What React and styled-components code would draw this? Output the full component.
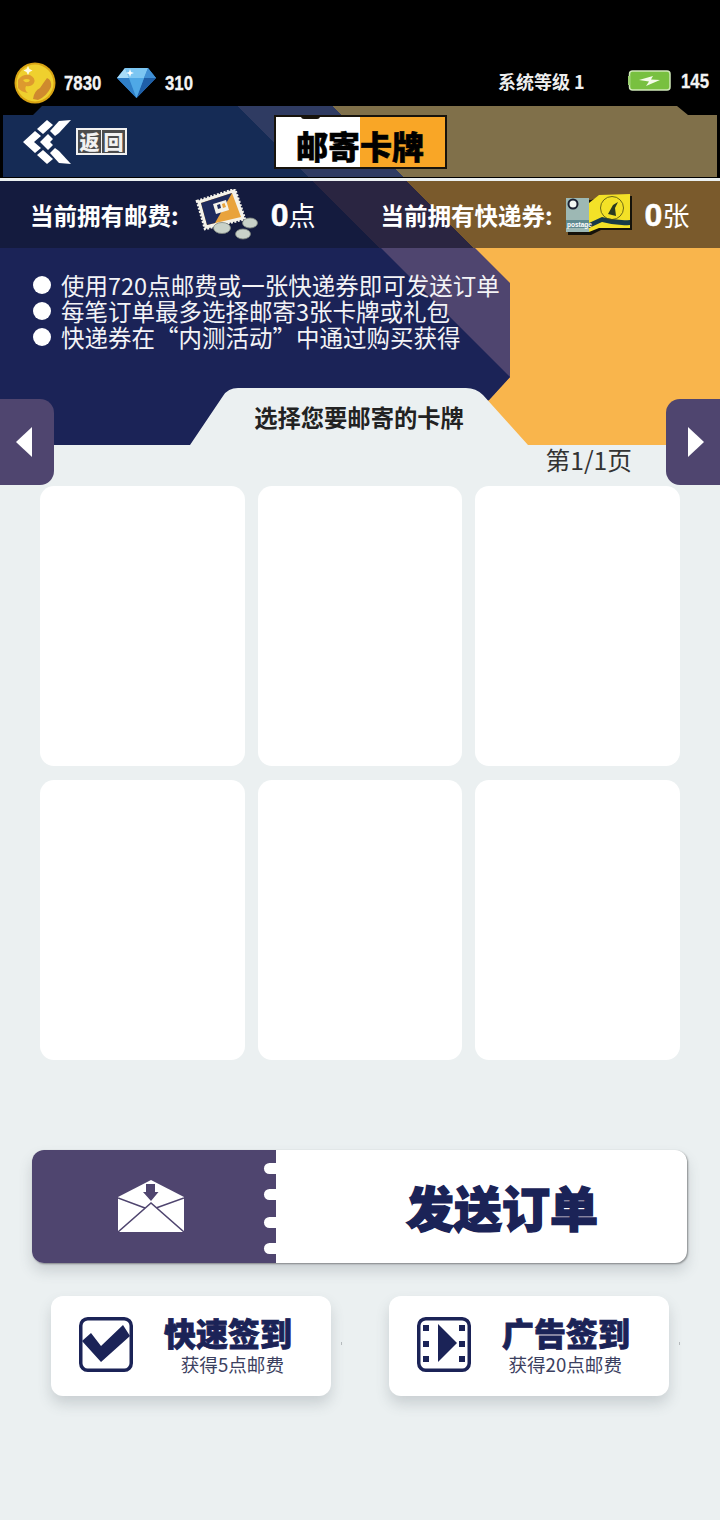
import React from "react";
import styled, { createGlobalStyle } from "styled-components";

const CJK = `"Noto Sans CJK SC", "Noto Sans", sans-serif`;
const NAVY = "#1b2357";
const PURPLE = "#4f456f";

const Global = createGlobalStyle`
  html, body { margin: 0; padding: 0; background: #ebf0f1; }
  * { box-sizing: border-box; }
`;

const Page = styled.div`
  position: relative;
  width: 720px;
  height: 1520px;
  overflow: hidden;
  background: #ebf0f1;
  font-family: ${CJK};
`;

const TopBlack = styled.div`
  background: #000;
`;

const StatusBar = styled.div`
  height: 106px;
  padding: 62px 12px 0 14px;
  display: flex;
  align-items: flex-start;
  justify-content: space-between;
`;
const StatusGroup = styled.div`
  display: flex;
  align-items: center;
  height: 42px;
`;
const RightGroup = styled(StatusGroup)`
  height: 38px;
`;
const Num = styled.span`
  display: inline-block;
  color: #f4f4f4;
  font: 700 21px "Liberation Sans", sans-serif;
  -webkit-text-stroke: 0.3px #f4f4f4;
  transform: scaleX(0.8);
  transform-origin: left center;
  margin-left: ${(p) => p.$ml || 0}px;
  width: ${(p) => p.$w}px;
`;
const Level = styled.span`
  color: #eee;
  font-size: 18px;
  font-weight: 700;
  width: 130px;
`;

const Header = styled.div`
  position: relative;
  height: 72px;
  margin: 0 3px;
  padding: 9px 0 0 20px;
  display: flex;
  align-items: flex-start;
  clip-path: polygon(0 9px, 30px 9px, 39px 0, 674px 0, 685px 9px, 714px 9px, 714px 71px, 0 71px);
  background: linear-gradient(
    45deg,
    #152b55 0 217px,
    #2f3b62 217px 284px,
    #80704a 284px
  );
`;
const BackIcon = styled.svg`
  flex: none;
  width: 50px;
  height: 46px;
  margin-top: 4px;
`;
const BackLabel = styled.div`
  flex: none;
  margin: 13px 0 0 3px;
  width: 51px;
  height: 27px;
  padding: 2px;
  background: #f1f1f1;
  display: flex;
  gap: 1px;
`;
const BackChar = styled.span`
  flex: 1;
  background: #4c4c4c;
  color: #f1f1f1;
  font-size: 20px;
  font-weight: 900;
  line-height: 23px;
  text-align: center;
`;
const Title = styled.div`
  position: relative;
  margin-left: 147px;
  width: 173px;
  height: 54px;
  border: 2px solid #17130c;
  background: linear-gradient(90deg, #fff 0 84px, #f9a626 84px);
  color: #000;
  font-size: 32px;
  font-weight: 900;
  line-height: 56px;
  padding-left: 20px;
  white-space: nowrap;
  -webkit-text-stroke: 0.6px #000;
  &::before {
    content: "";
    position: absolute;
    top: -2px;
    left: 25px;
    width: 19px;
    height: 4px;
    background: #17130c;
    border-radius: 0 0 3px 3px;
  }
`;

const InfoRow = styled.div`
  height: 67px;
  margin-top: 3px;
  padding: 0 0 0 30px;
  display: flex;
  align-items: center;
  background: linear-gradient(
    45deg,
    #141b3e 0 268px,
    #2a2541 268px 335px,
    #7a5a2c 335px
  );
`;
const InfoLabel = styled.span`
  color: #fff;
  font-size: 23.5px;
  font-weight: 700;
  white-space: nowrap;
`;
const InfoValue = styled.span`
  color: #fff;
  font-size: 27px;
  white-space: nowrap;
  margin-left: ${(p) => p.$ml}px;
  & b {
    font: 700 32px "Liberation Sans", sans-serif;
    -webkit-text-stroke: 0.5px #fff;
  }
`;
const IconSvg = styled.svg`
  flex: none;
  margin-left: ${(p) => p.$ml}px;
`;
const Spacer = styled.div`
  width: ${(p) => p.$w}px;
`;

const Notice = styled.div`
  position: relative;
  height: 197px;
  padding: 24px 0 0 33px;
  background: #f9b54c;
  &::before {
    content: "";
    position: absolute;
    inset: 0;
    background: ${PURPLE};
    clip-path: polygon(0 0, 475px 0, 510px 35px, 510px 129px, 489px 152px, 400px 197px, 0 197px);
  }
  &::after {
    content: "";
    position: absolute;
    inset: 0;
    background: ${NAVY};
    clip-path: polygon(0 0, 381px 0, 510px 129px, 489px 152px, 400px 197px, 0 197px);
  }
`;
const NoticeList = styled.ul`
  position: relative;
  z-index: 1;
  margin: 0;
  padding: 0;
  list-style: none;
`;
const NoticeItem = styled.li`
  display: flex;
  align-items: center;
  height: 26px;
  line-height: 26px;
  gap: 10px;
  color: #f3f3f6;
  font-size: 23.5px;
  white-space: nowrap;
  &::before {
    content: "";
    flex: none;
    width: 18px;
    height: 18px;
    border-radius: 50%;
    background: #fff;
  }
`;
const Tab = styled.div`
  position: absolute;
  z-index: 2;
  left: 190px;
  bottom: 0;
  width: 338px;
  height: 57px;
  background: #ebf0f1;
  clip-path: path("M0 57 L33 8 Q38 0 48 0 L276 0 Q286 0 293 7 L338 57 Z");
  color: #222;
  font-size: 23.3px;
  font-weight: 700;
  line-height: 58px;
  text-align: center;
`;

const PageArrow = styled.div`
  position: absolute;
  z-index: 3;
  top: 399px;
  ${(p) => (p.$right ? "right: 0;" : "left: 0;")}
  width: 54px;
  height: 86px;
  background: ${PURPLE};
  border-radius: ${(p) => (p.$right ? "14px 0 0 14px" : "0 14px 14px 0")};
  display: flex;
  align-items: center;
  padding: ${(p) => (p.$right ? "0 0 0 22px" : "0 0 0 16px")};
  &::after {
    content: "";
    width: 16px;
    height: 30px;
    background: #fff;
    clip-path: ${(p) =>
      p.$right ? "polygon(0 0, 100% 50%, 0 100%)" : "polygon(100% 0, 0 50%, 100% 100%)"};
  }
`;

const Content = styled.div`
  padding: 0 40px;
`;
const PageNo = styled.div`
  height: 41px;
  padding-right: 48px;
  text-align: right;
  color: #333;
  font-size: 24.7px;
  line-height: 29px;
`;
const CardGrid = styled.div`
  display: grid;
  grid-template-columns: repeat(3, 204.67px);
  grid-auto-rows: 280px;
  gap: 14px 13px;
`;
const Card = styled.div`
  background: #fff;
  border-radius: 14px;
`;

const SendButton = styled.div`
  margin: 90px 0 0 -8px;
  width: 655px;
  height: 113px;
  display: flex;
  border-radius: 12px;
  background: #fff;
  box-shadow: 0 8px 14px rgba(70, 80, 90, 0.2), 1px 1px 2px rgba(0, 0, 0, 0.4);
  overflow: hidden;
`;
const SendStub = styled.div`
  position: relative;
  flex: none;
  width: 244px;
  padding-left: 86px;
  display: flex;
  align-items: center;
  background: ${PURPLE};
`;
const Notch = styled.i`
  position: absolute;
  right: 0;
  top: ${(p) => p.$top}px;
  width: 12px;
  height: 11px;
  background: #fff;
  border-radius: 6px 0 0 6px;
`;
const SendLabel = styled.div`
  flex: 1;
  padding-left: 130px;
  color: ${NAVY};
  font-size: 48px;
  font-weight: 900;
  line-height: 113px;
  white-space: nowrap;
  -webkit-text-stroke: 1.5px ${NAVY};
`;

const SignRow = styled.div`
  margin: 33px 0 0 11px;
  display: flex;
  gap: 58px;
`;
const SignButton = styled.div`
  position: relative;
  width: 280px;
  height: 100px;
  padding: 21px 0 0 28px;
  display: flex;
  background: #fff;
  border-radius: 12px;
  box-shadow: 0 8px 14px rgba(70, 80, 90, 0.2);
  &::after {
    content: "";
    position: absolute;
    right: -11px;
    top: 46px;
    width: 1px;
    height: 3px;
    background: #b5babd;
  }
`;
const SignText = styled.div`
  margin: -3px 0 0 32px;
  display: flex;
  flex-direction: column;
  align-items: flex-end;
  width: 127px;
`;
const SignTitle = styled.div`
  color: ${NAVY};
  font-size: 32px;
  font-weight: 900;
  line-height: 36px;
  white-space: nowrap;
  -webkit-text-stroke: 0.8px ${NAVY};
`;
const SignSub = styled.div`
  margin: 2px 8px 0 0;
  color: #3b4060;
  font-size: 18.6px;
  line-height: 24px;
  white-space: nowrap;
`;

const Coin = () => (
  <svg width="42" height="42" viewBox="0 0 42 42">
    <circle cx="21" cy="21" r="20.5" fill="#d9a414" />
    <circle cx="21" cy="21" r="18.5" fill="#efd02e" />
    <path d="M4 18 Q8 12 16 13 Q22 16 20 21 Q17 25 12 24 Q10 28 14 31 Q7 30 4 26 Z" fill="#dd9a2e" />
    <path d="M9 18 Q13 16 16 18 Q15 21 11 20 Z" fill="#efd02e" />
    <path d="M19 37 Q20 29 26 26 Q30 20 33 16 Q38 18 37 25 Q33 34 24 38 Z" fill="#cf8a2e" />
    <path d="M14 4 l1.5 3 3 1.5 -3 1.5 -1.5 3 -1.5 -3 -3 -1.5 3 -1.5 Z" fill="#fffbe0" />
  </svg>
);

const Diamond = () => (
  <svg width="39" height="30" viewBox="0 0 39 30">
    <path d="M8 0 H31 L39 10 L19.5 30 L0 10 Z" fill="#3d8fd6" />
    <path d="M8 0 L12 10 H27 L31 0 Z" fill="#7cc6f2" />
    <path d="M0 10 H12 L19.5 30 Z" fill="#2f7fc8" />
    <path d="M39 10 H27 L19.5 30 Z" fill="#1f5fa8" />
    <path d="M12 10 H27 L19.5 30 Z" fill="#4fa8e6" />
    <path d="M8 0 L0 10 H12 Z" fill="#a8dcf8" />
    <path d="M31 0 L39 10 H27 Z" fill="#3f8fd4" />
    <path d="M13 1 l1 3 3 1 -3 1 -1 3 -1 -3 -3 -1 3 -1 Z" fill="#fff" />
  </svg>
);

const Battery = () => (
  <svg width="43" height="21" viewBox="0 0 43 21" style={{ marginTop: -2 }}>
    <rect x="1.5" y="1" width="40.5" height="19" rx="3" fill="#78c040" stroke="#cfe9b8" strokeWidth="1.5" />
    <rect x="0" y="6" width="2" height="9" fill="#9ad070" />
    <path d="M11 10 L25 6 L23 9.5 L32 10 L18 16 L21 11.5 Z" fill="#f4fbe8" />
  </svg>
);

const Chevrons = () => (
  <BackIcon viewBox="0 0 50 46">
    <g fill="#fff">
      <path d="M0 23 L12 12 L18 17 L11 23 L18 29 L12 34 Z" />
      <path d="M14 10 L24 1 L30 6 L20 15 Z" />
      <path d="M14 36 L20 31 L30 40 L24 45 Z" />
      <path d="M17 23 L25 15 L30 20 L27 23 L30 26 L25 31 Z" />
      <path d="M27 12 L36 2 L48 1 L36 14 L32 17 Z" />
      <path d="M27 34 L32 29 L36 32 L48 45 L36 44 Z" />
    </g>
  </BackIcon>
);

const Stamp = () => (
  <IconSvg $ml={16} width="63" height="52" viewBox="0 0 63 52">
    <path d="M2 12 L40 0 L50 30 L10 40 Z" fill="#f4f2ea" stroke="#f4f2ea" strokeWidth="2.5" strokeDasharray="2 1.5" />
    <path d="M6 14 L37 4 L46 28 L12 36 Z" fill="#e9a33c" />
    <path d="M6 14 L37 4 L20 34 L12 36 Z" fill="#1e2a5c" />
    <path d="M18 15 L31 11 L34 21 L21 25 Z" fill="#f4f2ea" />
    <path d="M22 16 L25 15 L26 19 L23 20 Z" fill="#1e2a5c" />
    <path d="M27 15 L29.5 14 L31 18 L28 19 Z" fill="#e9a33c" />
    <g fill="#c9d2c9" stroke="#7f877f" strokeWidth="0.8">
      <ellipse cx="27" cy="39" rx="8.5" ry="5.5" />
      <ellipse cx="55" cy="34" rx="7.5" ry="5" />
      <ellipse cx="48" cy="45" rx="7.5" ry="5" />
    </g>
  </IconSvg>
);

const Ticket = () => (
  <IconSvg $ml={13} width="66" height="44" viewBox="0 0 66 44">
    <path d="M2 7 H25 L35 4 L66 3 V37 H35 L25 42 H2 Z" fill="#15120a" />
    <rect x="0" y="5" width="23" height="34" fill="#9db8b4" />
    <path d="M23 10 L33 2 L64 1 V35 H33 L23 39 Z" fill="#f3e127" />
    <path d="M23 30 L36 24 Q50 28 64 27 V32 Q50 33 36 29 L23 35 Z" fill="#173a47" />
    <circle cx="46" cy="15" r="11.5" fill="none" stroke="#4a4a10" strokeWidth="0.8" />
    <path d="M42 21 L47 12 L52 9 L49 15 L50 23 Z" fill="#2a3a20" />
    <circle cx="7" cy="11" r="4.5" fill="#f4f8f4" stroke="#1c2233" strokeWidth="2" />
    <rect x="0" y="27" width="23" height="8" fill="#5f8a90" />
    <text x="1" y="33.5" fontSize="6.5" fontWeight="700" fill="#fff" fontFamily="Liberation Sans, sans-serif">postage</text>
  </IconSvg>
);

const MailIcon = () => (
  <svg width="66" height="53" viewBox="0 0 66 53">
    <path d="M0 17 L33 0 L66 17 V52 H0 Z" fill="#fff" />
    <path d="M28 4 H37 V12 H40.5 L33 21 L25 12 H28 Z" fill={PURPLE} />
    <path d="M0 18 L27 28 M66 18 L38 28 M0 52 L33 23 L66 52" fill="none" stroke={PURPLE} strokeWidth="1.6" />
  </svg>
);

const CheckIcon = () => (
  <svg width="54" height="55" viewBox="0 0 54 55" style={{ flex: "none" }}>
    <rect x="1.75" y="1.75" width="50.5" height="51.5" rx="7" fill="none" stroke={NAVY} strokeWidth="3.5" />
    <path d="M3 24 L12 16 L22 29 L44 8 L51 19 L22 45 Z" fill={NAVY} />
  </svg>
);

const FilmIcon = () => (
  <svg width="54" height="55" viewBox="0 0 54 55" style={{ flex: "none" }}>
    <rect x="1.75" y="1.75" width="50.5" height="51.5" rx="7" fill="none" stroke={NAVY} strokeWidth="3.5" />
    <g fill={NAVY}>
      <rect x="6" y="8" width="6" height="6" />
      <rect x="6" y="24" width="6" height="6" />
      <rect x="6" y="39" width="6" height="6" />
      <rect x="42" y="8" width="6" height="6" />
      <rect x="42" y="24" width="6" height="6" />
      <rect x="42" y="39" width="6" height="6" />
      <path d="M21 7 L40 26 L21 45 Z" />
    </g>
  </svg>
);

const cards = [0, 1, 2, 3, 4, 5];
const notices = [
  "使用720点邮费或一张快递券即可发送订单",
  "每笔订单最多选择邮寄3张卡牌或礼包",
  "快递券在“内测活动”中通过购买获得",
];

export default function App() {
  return (
    <Page>
      <Global />
      <TopBlack>
        <StatusBar>
          <StatusGroup>
            <Coin />
            <Num $ml={8} $w={53}>7830</Num>
            <Diamond />
            <Num $ml={9} $w={30}>310</Num>
          </StatusGroup>
          <RightGroup>
            <Level>系统等级 1</Level>
            <Battery />
            <Num $ml={10} $w={27}>145</Num>
          </RightGroup>
        </StatusBar>
        <Header>
          <Chevrons />
          <BackLabel>
            <BackChar>返</BackChar>
            <BackChar>回</BackChar>
          </BackLabel>
          <Title>邮寄卡牌</Title>
        </Header>
      </TopBlack>
      <TopBlack>
        <InfoRow>
          <InfoLabel>当前拥有邮费:</InfoLabel>
          <Stamp />
          <InfoValue $ml={13}><b>0</b>点</InfoValue>
          <Spacer $w={65} />
          <InfoLabel>当前拥有快递券:</InfoLabel>
          <Ticket />
          <InfoValue $ml={13}><b>0</b>张</InfoValue>
        </InfoRow>
      </TopBlack>
      <Notice>
        <NoticeList>
          {notices.map((n) => (
            <NoticeItem key={n}>{n}</NoticeItem>
          ))}
        </NoticeList>
        <Tab>选择您要邮寄的卡牌</Tab>
      </Notice>
      <PageArrow />
      <PageArrow $right />
      <Content>
        <PageNo>第1/1页</PageNo>
        <CardGrid>
          {cards.map((c) => (
            <Card key={c} />
          ))}
        </CardGrid>
        <SendButton>
          <SendStub>
            <MailIcon />
            <Notch $top={13} />
            <Notch $top={39} />
            <Notch $top={67} />
            <Notch $top={93} />
          </SendStub>
          <SendLabel>发送订单</SendLabel>
        </SendButton>
        <SignRow>
          <SignButton>
            <CheckIcon />
            <SignText>
              <SignTitle>快速签到</SignTitle>
              <SignSub>获得5点邮费</SignSub>
            </SignText>
          </SignButton>
          <SignButton>
            <FilmIcon />
            <SignText>
              <SignTitle>广告签到</SignTitle>
              <SignSub>获得20点邮费</SignSub>
            </SignText>
          </SignButton>
        </SignRow>
      </Content>
    </Page>
  );
}
